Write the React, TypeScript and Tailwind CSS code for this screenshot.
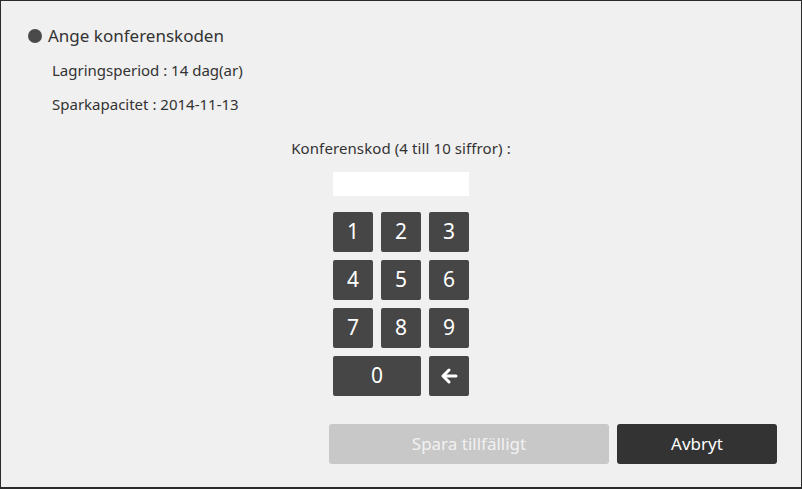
import React from "react";

const keys = ["1", "2", "3", "4", "5", "6", "7", "8", "9"];

function BackArrow() {
  return (
    <svg width="18" height="16" viewBox="0 0 18 16" fill="none">
      <path
        d="M16 8H3M9 2L3 8l6 6"
        stroke="#fff"
        strokeWidth="3"
        strokeLinecap="round"
        strokeLinejoin="round"
      />
    </svg>
  );
}

export default function App() {
  return (
    <div className="w-[802px] h-[489px] border border-b-2 border-[#2a2a2a] bg-[#f0f0f0] flex flex-col font-['Noto_Sans',sans-serif] text-[#333]">
      <div className="mt-[23px] ml-[27px] flex items-center gap-[6px] h-[24px]">
        <span className="w-[14px] h-[14px] rounded-full bg-[#4a4a4a]" />
        <span className="text-[17px] leading-[24px]">Ange konferenskoden</span>
      </div>

      <div className="ml-[51px] mt-[12px] text-[15px] leading-[20px]">
        Lagringsperiod : 14 dag(ar)
      </div>
      <div className="ml-[51px] mt-[14px] text-[15px] leading-[20px]">
        Sparkapacitet : 2014-11-13
      </div>

      <div className="mt-[24px] text-center text-[15px] leading-[20px] tracking-[0.1px]">
        Konferenskod (4 till 10 siffror) :
      </div>

      <div className="mt-[14px] flex justify-center">
        <input className="w-[136px] h-[24px] bg-white outline-none" />
      </div>

      <div className="mt-[16px] flex justify-center">
        <div className="grid grid-cols-3 gap-[8px] w-[136px]">
          {keys.map((k) => (
            <button
              key={k}
              className="h-[40px] rounded-[2px] bg-[#464646] text-white text-[21px] flex items-center justify-center"
            >
              {k}
            </button>
          ))}
          <button className="col-span-2 h-[40px] rounded-[2px] bg-[#464646] text-white text-[21px] flex items-center justify-center">
            0
          </button>
          <button className="h-[40px] rounded-[2px] bg-[#464646] flex items-center justify-center">
            <BackArrow />
          </button>
        </div>
      </div>

      <div className="mt-[28px] flex justify-end gap-[8px] pr-[24px]">
        <button className="w-[280px] h-[40px] rounded-[3px] bg-[#c8c8c8] text-[#f2f2f2] text-[17px]">
          Spara tillfälligt
        </button>
        <button className="w-[160px] h-[40px] rounded-[3px] bg-[#333333] text-white text-[17px]">
          Avbryt
        </button>
      </div>
    </div>
  );
}
